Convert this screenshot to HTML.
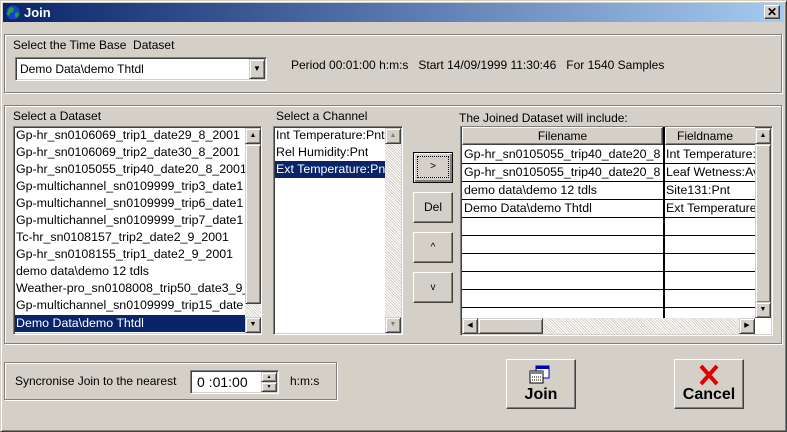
<!DOCTYPE html>
<html><head><style>
*{margin:0;padding:0;box-sizing:border-box}
body{width:787px;height:432px;background:#d4d0c8;font-family:"Liberation Sans",sans-serif;font-size:12px;color:#000;position:relative;overflow:hidden}
.a{position:absolute}
.grp{position:absolute;border:1px solid #808080;box-shadow:1px 1px 0 #fff inset,1px 1px 0 #fff}
.sunk{position:absolute;background:#fff;border:1px solid;border-color:#808080 #fff #fff #808080;box-shadow:inset 1px 1px 0 #404040,inset -1px -1px 0 #d4d0c8}
.btn{position:absolute;background:#d4d0c8;border:1px solid;border-color:#fff #404040 #404040 #fff;box-shadow:inset -1px -1px 0 #808080;text-align:center}
.row{position:absolute;left:2px;height:17px;line-height:17px;padding-left:1px;white-space:nowrap;overflow:hidden;font-size:12.4px}
.sel{background:#0a246a;color:#fff}
.chk{background-color:#e8e6e2;background-image:repeating-linear-gradient(45deg,#fff 0 1px,#d4d0c8 1px 2px)}
.arr{position:absolute;background:#d4d0c8;border:1px solid;border-color:#d4d0c8 #404040 #404040 #d4d0c8;box-shadow:inset 1px 1px 0 #fff,inset -1px -1px 0 #808080;font-size:7px;line-height:14px;text-align:center}
.cell{position:absolute;height:18px;line-height:17px;border-bottom:1px solid #000;white-space:nowrap;overflow:hidden;padding-left:2px;background:#fff;font-size:12.4px}
</style></head><body>
<div class="a" style="left:0;top:0;width:787px;height:432px;border:1px solid;border-color:#d4d0c8 #404040 #404040 #d4d0c8;box-shadow:inset 1px 1px 0 #fff,inset -1px -1px 0 #808080"></div>
<div class="a" style="left:3px;top:3px;width:781px;height:19px;background:linear-gradient(90deg,#0a246a,#a6caf0)"></div>
<svg class="a" style="left:5px;top:4px" width="17" height="17" viewBox="0 0 17 17"><circle cx="8" cy="8.5" r="7" fill="#1b3fc9"/><path d="M4 4l3-1 2 2-1 3-3 1-1 3-2-2zM10 9l3-1 1 3-3 3-1-2z" fill="#2aa02a"/></svg>
<div class="a" style="left:24px;top:4px;color:#fff;font-weight:bold;font-size:13px;line-height:17px">Join</div>
<div class="btn" style="left:764px;top:5px;width:16px;height:14px;font-weight:bold;font-size:12px;line-height:12px">✕</div>

<div class="grp" style="left:4px;top:34px;width:778px;height:59px"></div>
<div class="a" style="left:13px;top:38px;line-height:14px">Select the Time Base&nbsp; Dataset</div>
<div class="sunk" style="left:15px;top:57px;width:252px;height:24px"></div>
<div class="a" style="left:20px;top:61px;line-height:16px">Demo Data\demo Thtdl</div>
<div class="arr" style="left:249px;top:59px;width:16px;height:20px;line-height:18px;font-size:8px">▼</div>
<div class="a" style="left:291px;top:58px;line-height:14px">Period 00:01:00 h:m:s&nbsp;&nbsp; Start 14/09/1999 11:30:46&nbsp;&nbsp; For 1540 Samples</div>

<div class="grp" style="left:4px;top:105px;width:778px;height:239px"></div>
<div class="a" style="left:13px;top:109px;line-height:14px">Select a Dataset</div>
<div class="a" style="left:276px;top:109px;line-height:14px">Select a Channel</div>
<div class="a" style="left:459px;top:111px;line-height:14px">The Joined Dataset will include:</div>

<div class="sunk" style="left:13px;top:126px;width:249px;height:209px"></div>
<div class="a" style="left:13px;top:126px;width:232px;height:207px;overflow:hidden">
<div class="row" style="top:1px">Gp-hr_sn0106069_trip1_date29_8_2001</div>
<div class="row" style="top:18px">Gp-hr_sn0106069_trip2_date30_8_2001</div>
<div class="row" style="top:35px">Gp-hr_sn0105055_trip40_date20_8_2001</div>
<div class="row" style="top:52px">Gp-multichannel_sn0109999_trip3_date1</div>
<div class="row" style="top:69px">Gp-multichannel_sn0109999_trip6_date1</div>
<div class="row" style="top:86px">Gp-multichannel_sn0109999_trip7_date1</div>
<div class="row" style="top:103px">Tc-hr_sn0108157_trip2_date2_9_2001</div>
<div class="row" style="top:120px">Gp-hr_sn0108155_trip1_date2_9_2001</div>
<div class="row" style="top:137px">demo data\demo 12 tdls</div>
<div class="row" style="top:154px">Weather-pro_sn0108008_trip50_date3_9_</div>
<div class="row" style="top:171px">Gp-multichannel_sn0109999_trip15_date</div>
<div class="row sel" style="top:189px;width:230px">Demo Data\demo Thtdl</div>
</div>
<div class="a chk" style="left:245px;top:128px;width:16px;height:205px"></div>
<div class="arr" style="left:245px;top:128px;width:16px;height:16px">▲</div>
<div class="arr" style="left:245px;top:144px;width:16px;height:160px"></div>
<div class="arr" style="left:245px;top:317px;width:16px;height:16px">▼</div>

<div class="sunk" style="left:273px;top:126px;width:130px;height:209px"></div>
<div class="a" style="left:273px;top:126px;width:112px;height:200px;overflow:hidden">
<div class="row" style="top:1px">Int Temperature:Pnt</div>
<div class="row" style="top:18px">Rel Humidity:Pnt</div>
<div class="row sel" style="top:35px;width:112px">Ext Temperature:Pnt</div>
</div>
<div class="a chk" style="left:385px;top:128px;width:16px;height:205px"></div>
<div class="arr" style="left:385px;top:128px;width:16px;height:16px;color:#808080">▲</div>
<div class="arr" style="left:385px;top:317px;width:16px;height:16px;color:#808080">▼</div>

<div class="btn" style="left:413px;top:152px;width:40px;height:31px;border:1px solid #000;box-shadow:inset 1px 1px 0 #fff,inset -2px -2px 0 #808080;line-height:28px;font-size:10px"><span style="outline:1px dotted #000;display:inline-block;width:30px;height:20px;line-height:20px;margin-top:4px">&gt;</span></div>
<div class="btn" style="left:413px;top:192px;width:40px;height:31px;line-height:29px">Del</div>
<div class="btn" style="left:413px;top:232px;width:40px;height:31px;line-height:29px;font-size:10px">^</div>
<div class="btn" style="left:413px;top:272px;width:40px;height:31px;line-height:29px;font-size:10px">v</div>

<div class="sunk" style="left:460px;top:126px;width:313px;height:210px"></div>
<div class="a" style="left:462px;top:127px;width:293px;height:191px;overflow:hidden;background:#fff">
<div class="btn" style="left:0;top:0;width:201px;height:18px;line-height:16px">Filename</div>
<div class="btn" style="left:203px;top:0;width:100px;height:18px;line-height:16px;text-align:left;padding-left:11px">Fieldname</div>
<div class="a" style="left:201px;top:0;width:2px;height:191px;background:#000"></div>
<div class="cell" style="left:0;top:19px;width:201px">Gp-hr_sn0105055_trip40_date20_8</div>
<div class="cell" style="left:203px;top:19px;width:95px;padding-left:1px">Int Temperature:</div>
<div class="cell" style="left:0;top:37px;width:201px">Gp-hr_sn0105055_trip40_date20_8</div>
<div class="cell" style="left:203px;top:37px;width:95px;padding-left:1px">Leaf Wetness:Av</div>
<div class="cell" style="left:0;top:55px;width:201px">demo data\demo 12 tdls</div>
<div class="cell" style="left:203px;top:55px;width:95px;padding-left:1px">Site131:Pnt</div>
<div class="cell" style="left:0;top:73px;width:201px">Demo Data\demo Thtdl</div>
<div class="cell" style="left:203px;top:73px;width:95px;padding-left:1px">Ext Temperature</div>
<div class="cell" style="left:0;top:91px;width:201px"></div><div class="cell" style="left:203px;top:91px;width:95px"></div>
<div class="cell" style="left:0;top:109px;width:201px"></div><div class="cell" style="left:203px;top:109px;width:95px"></div>
<div class="cell" style="left:0;top:127px;width:201px"></div><div class="cell" style="left:203px;top:127px;width:95px"></div>
<div class="cell" style="left:0;top:145px;width:201px"></div><div class="cell" style="left:203px;top:145px;width:95px"></div>
<div class="cell" style="left:0;top:163px;width:201px"></div><div class="cell" style="left:203px;top:163px;width:95px"></div>
</div>
<div class="a chk" style="left:755px;top:128px;width:16px;height:190px"></div>
<div class="arr" style="left:755px;top:128px;width:16px;height:16px">▲</div>
<div class="arr" style="left:755px;top:144px;width:16px;height:159px"></div>
<div class="arr" style="left:755px;top:302px;width:16px;height:16px">▼</div>
<div class="a chk" style="left:462px;top:318px;width:293px;height:16px"></div>
<div class="arr" style="left:462px;top:318px;width:16px;height:16px">◀</div>
<div class="arr" style="left:478px;top:318px;width:65px;height:16px"></div>
<div class="arr" style="left:739px;top:318px;width:16px;height:16px">▶</div>

<div class="grp" style="left:4px;top:362px;width:333px;height:38px"></div>
<div class="a" style="left:15px;top:374px;line-height:14px">Syncronise Join to the nearest</div>
<div class="sunk" style="left:190px;top:370px;width:89px;height:24px"></div>
<div class="a" style="left:197px;top:373px;font-size:14px;line-height:18px">0 :01:00</div>
<div class="arr" style="left:261px;top:372px;width:16px;height:10px;font-size:5px;line-height:8px">▲</div>
<div class="arr" style="left:261px;top:382px;width:16px;height:10px;font-size:5px;line-height:8px">▼</div>
<div class="a" style="left:290px;top:374px;line-height:14px">h:m:s</div>

<div class="btn" style="left:506px;top:359px;width:70px;height:50px">
<svg class="a" style="left:21px;top:5px" width="26" height="20" viewBox="0 0 26 20"><rect x="8" y="1" width="13" height="12" fill="#fff" stroke="#0000a0"/><rect x="8" y="1" width="13" height="3" fill="#0000c0"/><rect x="2" y="6" width="13" height="12" fill="#fff" stroke="#000"/><rect x="2" y="6" width="13" height="3" fill="#808080"/><path d="M4 12h9M4 15h9" stroke="#000" stroke-dasharray="1 1"/></svg>
<div class="a" style="left:0;top:25px;width:68px;font-size:16px;font-weight:bold;line-height:20px">Join</div></div>
<div class="btn" style="left:674px;top:359px;width:70px;height:50px">
<svg class="a" style="left:23px;top:4px" width="22" height="22" viewBox="0 0 22 22"><path d="M3 2L19 20M19 2L3 20" stroke="#e00000" stroke-width="4"/></svg>
<div class="a" style="left:0;top:25px;width:68px;font-size:16px;font-weight:bold;line-height:20px">Cancel</div></div>
</body></html>
